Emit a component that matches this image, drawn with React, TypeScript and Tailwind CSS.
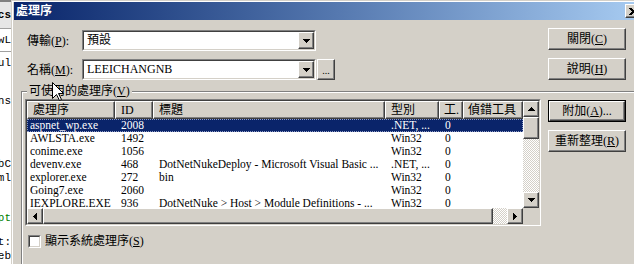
import React from "react";

const FONT = "font-['Liberation_Serif','Noto_Sans_CJK_TC',serif]";
const RAISED =
  "border border-t-white border-l-white border-r-[#404040] border-b-[#404040] shadow-[inset_-1px_-1px_0_#808080] bg-[#d4d0c8]";
const CHECKER =
  "[background-image:repeating-conic-gradient(#ffffff_0_25%,#d4d0c8_0_50%)] [background-size:2px_2px]";

function TriDown() {
  return (
    <svg width="7" height="4" viewBox="0 0 7 4" shapeRendering="crispEdges">
      <path d="M0 0h7v1h-1v1h-1v1h-1v1h-1v-1h-1v-1h-1v-1h-1z" fill="#000" />
    </svg>
  );
}
function TriUp() {
  return (
    <svg width="7" height="4" viewBox="0 0 7 4" shapeRendering="crispEdges">
      <path d="M3 0h1v1h1v1h1v1h1v1h-7v-1h1v-1h1v-1h1z" fill="#000" />
    </svg>
  );
}
function TriLeft() {
  return (
    <svg width="4" height="7" viewBox="0 0 4 7" shapeRendering="crispEdges">
      <path d="M3 0h1v7h-1v-1h-1v-1h-1v-1h-1v-1h1v-1h1v-1h1z" fill="#000" />
    </svg>
  );
}
function TriRight() {
  return (
    <svg width="4" height="7" viewBox="0 0 4 7" shapeRendering="crispEdges">
      <path d="M0 0h1v1h1v1h1v1h1v1h-1v1h-1v1h-1v1h-1z" fill="#000" />
    </svg>
  );
}

function Btn({
  children,
  isDefault = false,
}: {
  children: React.ReactNode;
  isDefault?: boolean;
}) {
  const inner = (
    <div
      className={`flex h-full w-full items-center justify-center text-[12px] leading-[14px] text-black ${RAISED}`}
    >
      {children}
    </div>
  );
  return (
    <div className={`h-[22px] w-[78px] ${isDefault ? "border border-black" : ""}`}>
      {inner}
    </div>
  );
}

function U({ children }: { children: React.ReactNode }) {
  return <span className="underline underline-offset-[1px]">{children}</span>;
}

function Combo({ text }: { text: string }) {
  return (
    <div className="flex h-[21px] w-[234px] border border-t-[#808080] border-l-[#808080] border-r-white border-b-white">
      <div className="flex flex-1 border border-t-[#404040] border-l-[#404040] border-r-[#d4d0c8] border-b-[#d4d0c8] bg-white">
        <span className="flex-1 pl-[3px] text-[12px] leading-[17px] text-black">{text}</span>
        <div className={`flex h-[17px] w-[16px] items-center justify-center ${RAISED}`}>
          <TriDown />
        </div>
      </div>
    </div>
  );
}

const COLS = [88, 38, 232, 54, 24, 60];
const HEADERS = ["處理序", "ID", "標題", "型別", "工.", "偵錯工具"];
const ROWS: [string, string, string, string, string][] = [
  ["aspnet_wp.exe", "2008", "", ".NET, ...", "0"],
  ["AWLSTA.exe", "1492", "", "Win32", "0"],
  ["conime.exe", "1056", "", "Win32", "0"],
  ["devenv.exe", "468", "DotNetNukeDeploy - Microsoft Visual Basic ...", ".NET, ...", "0"],
  ["explorer.exe", "272", "bin", "Win32", "0"],
  ["Going7.exe", "2060", "", "Win32", "0"],
  ["IEXPLORE.EXE", "936", "DotNetNuke > Host > Module Definitions - ...", "Win32", "0"],
];

function ListView() {
  return (
    <div className="h-[127px] w-[516px] border border-t-[#808080] border-l-[#808080] border-r-white border-b-white">
      <div className="flex h-full w-full flex-col border border-t-[#404040] border-l-[#404040] border-r-[#d4d0c8] border-b-[#d4d0c8]">
        <div className="flex h-[107px]">
          <div className="w-[496px] overflow-hidden bg-white">
            <div className="flex h-[18px]">
              {HEADERS.map((h, i) => (
                <div
                  key={i}
                  style={{ width: COLS[i] }}
                  className={`flex shrink-0 items-center overflow-hidden whitespace-nowrap text-[12px] leading-[14px] text-black ${
                    i >= 4 ? "pl-[4px]" : "pl-[5px]"
                  } ${RAISED}`}
                >
                  {h}
                </div>
              ))}
            </div>
            {ROWS.map((r, ri) => (
              <div
                key={ri}
                className={`flex h-[13px] ${
                  ri === 0
                    ? "bg-[#0a246a] text-white outline-1 outline-dotted -outline-offset-1 outline-[#8d9ac4]"
                    : "text-black"
                }`}
              >
                {[r[0], r[1], r[2], r[3], r[4], ""].map((c, ci) => (
                  <div
                    key={ci}
                    style={{ width: COLS[ci] }}
                    className={`shrink-0 overflow-hidden whitespace-nowrap text-[11.5px] leading-[13px] ${
                      ci === 0 ? "pl-[3px]" : "pl-[6px]"
                    }`}
                  >
                    {c}
                  </div>
                ))}
              </div>
            ))}
          </div>
          <div className="flex w-[16px] flex-col">
            <div className={`flex h-[16px] items-center justify-center ${RAISED}`}>
              <TriUp />
            </div>
            <div className={`h-[22px] ${RAISED}`} />
            <div className={`flex-1 ${CHECKER}`} />
            <div className={`flex h-[16px] items-center justify-center ${RAISED}`}>
              <TriDown />
            </div>
          </div>
        </div>
        <div className="flex h-[16px]">
          <div className={`flex w-[16px] items-center justify-center ${RAISED}`}>
            <TriLeft />
          </div>
          <div className={`w-[450px] ${RAISED}`} />
          <div className={`flex-1 ${CHECKER}`} />
          <div className={`flex w-[16px] items-center justify-center ${RAISED}`}>
            <TriRight />
          </div>
          <div className="w-[16px] bg-[#d4d0c8]" />
        </div>
      </div>
    </div>
  );
}

function BackStrip() {
  const line = "h-px bg-[#a0a0a0]";
  const cell = "flex items-center justify-end overflow-hidden";
  return (
    <div className="flex w-[11px] shrink-0 flex-col overflow-hidden bg-white font-['Liberation_Mono',monospace] text-[11px] leading-[14px] text-black">
      <div className="h-[2px] shrink-0 bg-[#808080]" />
      <div className={`h-[26px] shrink-0 bg-[#e6e6e6] font-bold ${cell}`}>
        <span className="shrink-0 whitespace-nowrap">ics</span>
      </div>
      <div className={`${line} shrink-0`} />
      <div className={`h-[22px] shrink-0 ${cell}`}>
        <span className="shrink-0 whitespace-nowrap">awL</span>
      </div>
      <div className={`${line} shrink-0`} />
      <div className={`h-[22px] shrink-0 ${cell}`}>
        <span className="shrink-0 whitespace-nowrap">aul</span>
      </div>
      <div className="h-[20px] shrink-0" />
      <div className={`h-[14px] shrink-0 ${cell}`}>
        <span className="shrink-0 whitespace-nowrap">ons</span>
      </div>
      <div className="h-[49px] shrink-0" />
      <div className={`h-[14px] shrink-0 ${cell}`}>
        <span className="shrink-0 whitespace-nowrap">abC</span>
      </div>
      <div className={`h-[14px] shrink-0 ${cell}`}>
        <span className="shrink-0 whitespace-nowrap">xml</span>
      </div>
      <div className="h-[26px] shrink-0" />
      <div className={`h-[14px] shrink-0 text-[#008000] ${cell}`}>
        <span className="shrink-0 whitespace-nowrap">ipt</span>
      </div>
      <div className="h-[10px] shrink-0" />
      <div className={`h-[14px] shrink-0 ${cell}`}>
        <span className="shrink-0 whitespace-nowrap">t:</span>
      </div>
      <div className={`h-[14px] shrink-0 ${cell}`}>
        <span className="shrink-0 whitespace-nowrap">web</span>
      </div>
    </div>
  );
}

export default function App() {
  return (
    <div className={`relative flex h-[264px] w-[634px] overflow-hidden bg-white ${FONT}`}>
      <BackStrip />
      <div className="flex flex-1 flex-col border-l border-t border-[#d4d0c8] bg-[#d4d0c8]">
        <div className="flex flex-1 flex-col border-l border-t border-white pl-[1px]">
          {/* title bar */}
          <div className="flex h-[18px] shrink-0 items-center overflow-hidden bg-gradient-to-r from-[#0a246a] to-[#a6caf0] pl-[2px]">
            <span className="flex-1 text-[12px] font-bold leading-[14px] text-white">處理序</span>
            <div className={`mr-[-7px] flex h-[14px] w-[16px] shrink-0 items-center justify-center ${RAISED}`}>
              <svg width="8" height="7" viewBox="0 0 8 7" shapeRendering="crispEdges">
                <path d="M0 0h2l2 2l2-2h2l-3 3.5l3 3.5h-2l-2-2l-2 2h-2l3-3.5z" fill="#000" />
              </svg>
            </div>
          </div>

          {/* body */}
          <div className="flex flex-1 flex-col">
            <div className="flex pt-[8px]">
              <div className="flex w-[534px] flex-col gap-[8px] pl-[13px] pt-[2px]">
                <div className="flex h-[21px] items-center">
                  <span className="w-[55px] text-[12px] leading-[14px] text-black">
                    傳輸(<U>P</U>):
                  </span>
                  <Combo text="預設" />
                </div>
                <div className="flex h-[21px] items-center">
                  <span className="w-[55px] text-[12px] leading-[14px] text-black">
                    名稱(<U>M</U>):
                  </span>
                  <Combo text="LEEICHANGNB" />
                  <div className={`ml-[1px] flex h-[21px] w-[18px] items-end justify-center pb-[3px] text-[10px] leading-[10px] text-black ${RAISED}`}>
                    ...
                  </div>
                </div>
              </div>
              <div className="flex flex-col gap-[8px]">
                <Btn>
                  關閉(<U>C</U>)
                </Btn>
                <Btn>
                  說明(<U>H</U>)
                </Btn>
              </div>
            </div>

            {/* group box */}
            <div className="relative ml-[7px] mt-[11px] flex flex-1 flex-col border-l border-t border-[#808080]">
              <div className="flex flex-1 flex-col border-l border-t border-white">
                <div className="flex items-start">
                  <div className="ml-[2px] mt-[6px]">
                    <ListView />
                  </div>
                  <div className="ml-[7px] mt-[7px] flex flex-col gap-[8px]">
                    <Btn isDefault>
                      附加(<U>A</U>)...
                    </Btn>
                    <Btn>
                      重新整理(<U>R</U>)
                    </Btn>
                  </div>
                </div>
                <div className="ml-[5px] mt-[8px] flex items-center">
                  <div className="h-[13px] w-[13px] border border-t-[#808080] border-l-[#808080] border-r-white border-b-white">
                    <div className="h-full w-full border border-t-[#404040] border-l-[#404040] border-r-[#d4d0c8] border-b-[#d4d0c8] bg-white" />
                  </div>
                  <span className="ml-[4px] text-[12px] leading-[14px] text-black">
                    顯示系統處理序(<U>S</U>)
                  </span>
                </div>
              </div>
              <span className="absolute left-[5px] top-[-8px] bg-[#d4d0c8] px-[2px] text-[12px] leading-[14px] text-black">
                可使用的處理序(<U>V</U>)
              </span>
            </div>
          </div>
        </div>
      </div>

      {/* mouse cursor */}
      <svg
        className="pointer-events-none absolute left-[52px] top-[82px]"
        width="13"
        height="20"
        viewBox="0 0 13 20"
      >
        <path
          d="M0.5 0.5 L0.5 16.5 L4.5 12.5 L7.5 18.5 L9.5 17.5 L6.5 11.5 L11.5 11.5 Z"
          fill="#fff"
          stroke="#000"
          strokeWidth="1"
        />
      </svg>
    </div>
  );
}
